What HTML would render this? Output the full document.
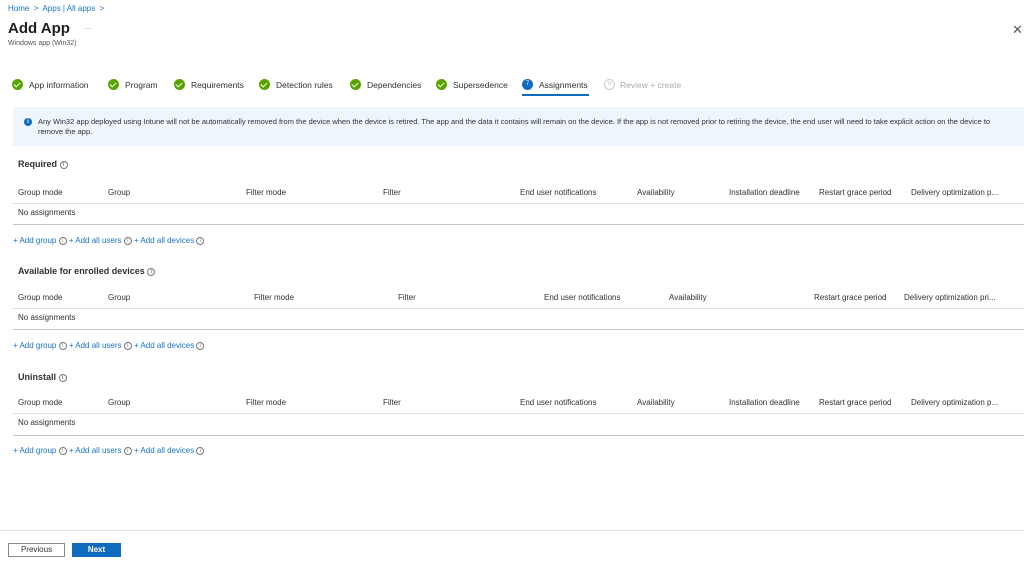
<!DOCTYPE html>
<html><head><style>
body{margin:0;width:1024px;height:563px;background:#fff;font-family:"Liberation Sans",sans-serif;color:#323130;position:relative;overflow:hidden}
.a{position:absolute;white-space:nowrap}
.s{font-size:8px}
.l{color:#1a73c8}
.chk{position:absolute;width:11px;height:11px;border-radius:50%;background:#57a300;top:79px}
.chk:after{content:"";position:absolute;left:3px;top:2px;width:3px;height:5px;border:solid #fff;border-width:0 1.5px 1.5px 0;transform:rotate(45deg)}
.st{position:absolute;top:80px;font-size:8.5px}
.i{display:inline-block;width:6px;height:6px;border:1px solid #777;border-radius:50%;font-size:5px;line-height:6px;text-align:center;vertical-align:middle;color:#777}
.hr{position:absolute;left:13px;right:0;height:1px;background:#e1dfdd}
.h{font-weight:bold;font-size:9px}
</style></head><body>
<div class="a s l" style="left:8px;top:4px">Home &nbsp;&gt;&nbsp; Apps | All apps &nbsp;&gt;</div>
<div class="a" style="left:8px;top:20px;font-size:15px;font-weight:bold;color:#201f1e">Add App</div>
<div class="a s" style="left:84px;top:24px;color:#888">···</div>
<div class="a" style="left:8px;top:40px;font-size:7px;color:#555">Windows app (Win32)</div>
<div class="a" style="left:1012px;top:22px;font-size:13px;color:#555">✕</div>

<div class="chk" style="left:12px"></div><div class="st" style="left:29px">App information</div>
<div class="chk" style="left:108px"></div><div class="st" style="left:125px">Program</div>
<div class="chk" style="left:174px"></div><div class="st" style="left:191px">Requirements</div>
<div class="chk" style="left:259px"></div><div class="st" style="left:276px">Detection rules</div>
<div class="chk" style="left:350px"></div><div class="st" style="left:367px">Dependencies</div>
<div class="chk" style="left:436px"></div><div class="st" style="left:453px">Supersedence</div>
<div class="a" style="left:522px;top:79px;width:11px;height:11px;border-radius:50%;background:#0f6cbd;color:#fff;font-size:6px;line-height:11px;text-align:center">7</div>
<div class="st" style="left:539px">Assignments</div>
<div class="a" style="left:522px;top:94px;width:67px;height:2px;background:#0f6cbd"></div>
<div class="a" style="left:604px;top:79px;width:9px;height:9px;border-radius:50%;border:1px solid #ccc;color:#bbb;font-size:5px;line-height:9px;text-align:center">8</div>
<div class="st" style="left:620px;color:#aaa">Review + create</div>

<div class="a" style="left:13px;top:107px;right:0;height:39px;background:#eef5fc"></div>
<div class="a" style="left:24px;top:118px;width:8px;height:8px;border-radius:50%;background:#0f6cbd;color:#fff;font-size:6px;line-height:8px;text-align:center;font-weight:bold">i</div>
<div class="a" style="left:38px;top:117px;width:975px;font-size:7.5px;line-height:10px;white-space:normal;color:#323130">Any Win32 app deployed using Intune will not be automatically removed from the device when the device is retired. The app and the data it contains will remain on the device. If the app is not removed prior to retiring the device, the end user will need to take explicit action on the device to remove the app.</div>

<!-- Required -->
<div class="a h" style="left:18px;top:159px">Required <span class="i">i</span></div>
<div class="a s" style="left:18px;top:188px">Group mode</div><div class="a s" style="left:108px;top:188px">Group</div><div class="a s" style="left:246px;top:188px">Filter mode</div><div class="a s" style="left:383px;top:188px">Filter</div><div class="a s" style="left:520px;top:188px">End user notifications</div><div class="a s" style="left:637px;top:188px">Availability</div><div class="a s" style="left:729px;top:188px">Installation deadline</div><div class="a s" style="left:819px;top:188px">Restart grace period</div><div class="a s" style="left:911px;top:188px">Delivery optimization p...</div>
<div class="hr" style="top:203px"></div>
<div class="a s" style="left:18px;top:208px">No assignments</div>
<div class="hr" style="top:224px;background:#c8c6c4"></div>
<div class="a s l" style="left:13px;top:236px">+ Add group <span class="i">i</span> + Add all users <span class="i">i</span> + Add all devices <span class="i">i</span></div>

<!-- Available -->
<div class="a h" style="left:18px;top:266px">Available for enrolled devices <span class="i">i</span></div>
<div class="a s" style="left:18px;top:293px">Group mode</div><div class="a s" style="left:108px;top:293px">Group</div><div class="a s" style="left:254px;top:293px">Filter mode</div><div class="a s" style="left:398px;top:293px">Filter</div><div class="a s" style="left:544px;top:293px">End user notifications</div><div class="a s" style="left:669px;top:293px">Availability</div><div class="a s" style="left:814px;top:293px">Restart grace period</div><div class="a s" style="left:904px;top:293px">Delivery optimization pri...</div>
<div class="hr" style="top:308px"></div>
<div class="a s" style="left:18px;top:313px">No assignments</div>
<div class="hr" style="top:329px;background:#c8c6c4"></div>
<div class="a s l" style="left:13px;top:341px">+ Add group <span class="i">i</span> + Add all users <span class="i">i</span> + Add all devices <span class="i">i</span></div>

<!-- Uninstall -->
<div class="a h" style="left:18px;top:372px">Uninstall <span class="i">i</span></div>
<div class="a s" style="left:18px;top:398px">Group mode</div><div class="a s" style="left:108px;top:398px">Group</div><div class="a s" style="left:246px;top:398px">Filter mode</div><div class="a s" style="left:383px;top:398px">Filter</div><div class="a s" style="left:520px;top:398px">End user notifications</div><div class="a s" style="left:637px;top:398px">Availability</div><div class="a s" style="left:729px;top:398px">Installation deadline</div><div class="a s" style="left:819px;top:398px">Restart grace period</div><div class="a s" style="left:911px;top:398px">Delivery optimization p...</div>
<div class="hr" style="top:413px"></div>
<div class="a s" style="left:18px;top:418px">No assignments</div>
<div class="hr" style="top:435px;background:#c8c6c4"></div>
<div class="a s l" style="left:13px;top:446px">+ Add group <span class="i">i</span> + Add all users <span class="i">i</span> + Add all devices <span class="i">i</span></div>

<div class="a" style="left:0;right:0;top:530px;height:1px;background:#e1dfdd"></div>
<div class="a s" style="left:8px;top:543px;width:55px;height:12px;border:1px solid #8a8886;text-align:center;line-height:12px">Previous</div>
<div class="a s" style="left:72px;top:543px;width:49px;height:14px;background:#0f6cbd;color:#fff;text-align:center;line-height:14px;font-weight:bold">Next</div>
</body></html>
